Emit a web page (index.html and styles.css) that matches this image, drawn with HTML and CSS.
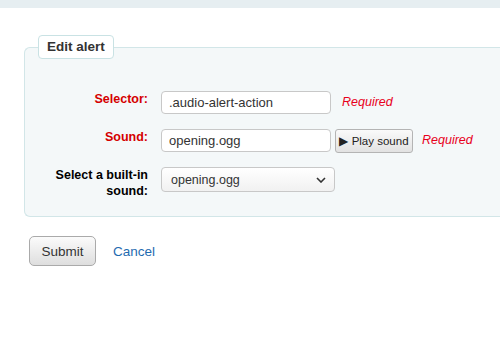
FILE: index.html
```html
<!DOCTYPE html>
<html>
  <head>
    <meta charset="UTF-8">
    <title>Edit alert</title>
    <link rel="stylesheet" href="styles.css">
  </head>
  <body>
    <div class="topbar"></div>

    <div class="main">
      <form class="alert-form">
        <fieldset class="rows">
          <legend>Edit alert</legend>

          <div class="row">
            <label for="selector" class="required">Selector:</label>
            <input type="text" id="selector" class="field" value=".audio-alert-action">
            <span class="required-note">Required</span>
          </div>

          <div class="row">
            <label for="sound" class="required">Sound:</label>
            <input type="text" id="sound" class="field" value="opening.ogg">
            <button type="button" class="play-btn"><span class="play-icon">&#9654;</span> Play sound</button>
            <span class="required-note">Required</span>
          </div>

          <div class="row">
            <label for="builtin">Select a built-in sound:</label>
            <div class="select-wrap">
              <select id="builtin">
                <option>opening.ogg</option>
              </select>
              <svg class="chevron" width="10" height="6" viewBox="0 0 10 6">
                <path d="M1 1 L5 5 L9 1" fill="none" stroke="#333" stroke-width="1.6"/>
              </svg>
            </div>
          </div>
        </fieldset>

        <div class="actions">
          <button type="button" class="submit-btn">Submit</button>
          <a href="#" class="cancel">Cancel</a>
        </div>
      </form>
    </div>
  </body>
</html>
```

FILE: styles.css
```css
body {
  font-family: "Liberation Sans", Arial, sans-serif;
  margin: 0;
  padding: 0;
  background-color: #fff;
  color: #333;
}

.topbar {
  height: 8px;
  background-color: #e6eef1;
}

.main {
  padding: 27px 0 0 24px;
}

fieldset.rows {
  margin: 0;
  padding: 32px 0 11px 0;
  background-color: #f4f8f9;
  border: 1px solid #d2e6e8;
  border-right: 0;
  border-radius: 6px 0 0 6px;
}

legend {
  margin-left: 13px;
  padding: 3px 8px;
  font-size: 13.5px;
  font-weight: bold;
  line-height: 16px;
  color: #333;
  background-color: #fff;
  border: 1px solid #c9e2e4;
  border-radius: 4px;
}

.row {
  display: flex;
  align-items: flex-start;
  height: 38px;
}

.row label {
  flex: none;
  width: 110px;
  margin-left: 13px;
  margin-right: 13px;
  text-align: right;
  font-size: 12.5px;
  font-weight: bold;
  line-height: 16px;
  color: #000;
}

.row label.required {
  color: #d40000;
}

.field {
  box-sizing: border-box;
  width: 170px;
  height: 23px;
  margin: 0;
  padding: 0 7px;
  font-family: "Liberation Sans", Arial, sans-serif;
  font-size: 13px;
  color: #333;
  background-color: #fff;
  border: 1px solid #c8c8c8;
  border-radius: 4px;
}

.required-note {
  margin-left: 11px;
  font-size: 12.5px;
  font-style: italic;
  line-height: 23px;
  color: #e8001c;
}

.play-btn {
  box-sizing: border-box;
  width: 78px;
  height: 24px;
  margin-left: 4px;
  padding: 0;
  font-family: "Liberation Sans", Arial, sans-serif;
  font-size: 11.5px;
  color: #222;
  background: linear-gradient(#fafafa, #e2e2e2);
  border: 1px solid #b4b4b4;
  border-radius: 3px;
}

.play-icon {
  font-size: 12px;
}

.play-btn + .required-note {
  margin-left: 9px;
}

.select-wrap {
  position: relative;
  width: 174px;
}

.select-wrap select {
  box-sizing: border-box;
  width: 174px;
  height: 25px;
  margin: 0;
  padding: 0 9px;
  font-family: "Liberation Sans", Arial, sans-serif;
  font-size: 12.5px;
  color: #333;
  appearance: none;
  background: linear-gradient(#fff, #f1f1f1);
  border: 1px solid #c8c8c8;
  border-radius: 4px;
}

.chevron {
  position: absolute;
  right: 9px;
  top: 10px;
  pointer-events: none;
}

.actions {
  display: flex;
  align-items: center;
  padding: 19px 0 0 5px;
}

.submit-btn {
  box-sizing: border-box;
  width: 67px;
  height: 30px;
  padding: 0;
  font-family: "Liberation Sans", Arial, sans-serif;
  font-size: 13.5px;
  color: #333;
  background: linear-gradient(#fbfbfb, #dedede);
  border: 1px solid #aaa;
  border-radius: 5px;
}

.cancel {
  margin-left: 17px;
  font-size: 13.5px;
  color: #1f6bb0;
  text-decoration: none;
}
```
